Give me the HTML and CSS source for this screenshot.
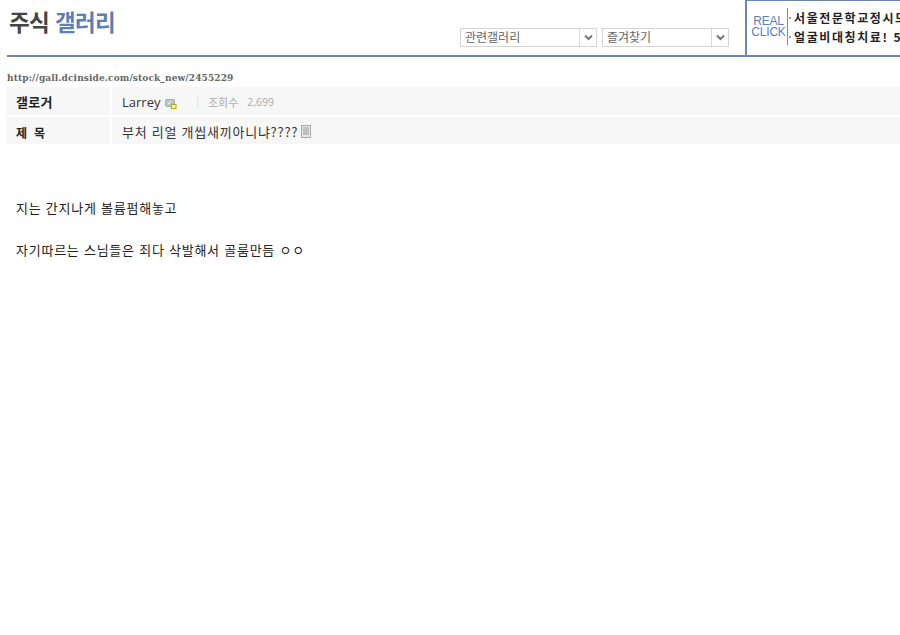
FILE: index.html
```html
<!DOCTYPE html>
<html lang="ko">
<head>
<meta charset="utf-8">
<title>주식 갤러리</title>
<link rel="stylesheet" href="styles.css">
</head>
<body>
<header class="top">
  <h1 class="title">주식 <span class="title-blue">갤러리</span></h1>
  <div class="selects">
    <div class="select sel-a"><span class="sel-text">관련갤러리</span><span class="sel-btn"><svg width="9" height="7" viewBox="0 0 9 7"><path d="M1 1.5 4.5 5 8 1.5" fill="none" stroke="#777" stroke-width="2"/></svg></span></div>
    <div class="select sel-b"><span class="sel-text">즐겨찾기</span><span class="sel-btn"><svg width="9" height="7" viewBox="0 0 9 7"><path d="M1 1.5 4.5 5 8 1.5" fill="none" stroke="#777" stroke-width="2"/></svg></span></div>
  </div>
  <div class="ad">
    <div class="ad-logo"><span>REAL</span><span>CLICK</span></div>
    <div class="ad-lines">
      <div class="ad-line"><i class="dot"></i>서울전문학교정시모집</div>
      <div class="ad-line"><i class="dot"></i>얼굴비대칭치료! 50%</div>
    </div>
  </div>
</header>
<div class="url">http://gall.dcinside.com/stock_new/2455229</div>
<div class="row">
  <div class="label">갤로거</div>
  <div class="value">
    <span class="name">Larrey</span>
    <svg class="user-icon" width="12" height="11" viewBox="0 0 12 11"><rect x="0.5" y="1.5" width="9" height="7" rx="1.5" fill="#bfc4c8" stroke="#a5a9ad"/><path d="M3 6 6 3.5" stroke="#fff"/><rect x="6.5" y="6.5" width="4.5" height="4" fill="#fff3b0" stroke="#c9a400"/></svg>
    <span class="sep">|</span>
    <span class="views">조회수</span>
    <span class="count">2,699</span>
  </div>
</div>
<div class="row row-last">
  <div class="label label-wide">제 목</div>
  <div class="value">
    <span class="subject">부처 리얼 개씹새끼아니냐????</span>
    <svg class="doc-icon" width="10" height="13" viewBox="0 0 10 13"><rect x="0.5" y="0.5" width="9" height="12" fill="#e8e8e8" stroke="#a8a8a8"/><path d="M2 3h6M2 5h6M2 7h6M2 9h6" stroke="#9a9a9a"/></svg>
  </div>
</div>
<main class="content">
  <p class="para">지는 간지나게 볼륨펌해놓고</p>
  <p class="para">자기따르는 스님들은 죄다 삭발해서 골룸만듬 ㅇㅇ</p>
</main>
</body>
</html>
```

FILE: styles.css
```css
* { box-sizing: border-box; }
html, body { margin: 0; padding: 0; }
body {
  width: 900px;
  height: 635px;
  overflow: hidden;
  background: #fff;
  color: #222;
  font-family: "Noto Sans CJK KR", "Liberation Sans", sans-serif;
}
.top {
  display: flex;
  margin-left: 7px;
  height: 57px;
  border-bottom: 2px solid #6d87ad;
}
.title {
  flex: none;
  margin: 6px 0 0 2px;
  width: 451px;
  font-size: 22.5px;
  line-height: 30px;
  font-weight: 700;
  letter-spacing: -0.6px;
  color: #444;
}
.title-blue { color: #5d7fb5; }
.selects { display: flex; gap: 5px; margin-top: 28px; height: 19px; flex: none; }
.select {
  display: flex;
  height: 19px;
  background: #fff;
  border: 1px solid #d4d4d4;
}
.sel-a { width: 137px; }
.sel-b { width: 127px; }
.sel-text {
  flex: 1;
  padding-left: 4px;
  font-size: 12px;
  line-height: 16px;
  color: #666;
}
.sel-btn {
  width: 17px;
  display: flex;
  align-items: center;
  justify-content: center;
  border-left: 1px solid #d8d8d8;
}
.ad {
  display: flex;
  margin-left: 16px;
  flex: none;
  width: 155px;
  height: 55px;
  border-left: 2px solid #6d87ad;
  border-top: 1px solid #6d87ad;
  padding: 7px 0 0 3px;
  overflow: hidden;
}
.ad-logo {
  display: flex;
  flex-direction: column;
  flex: none;
  width: 37px;
  margin-top: 8px;
  font-family: "Liberation Sans", sans-serif;
  font-size: 12px;
  line-height: 11px;
  letter-spacing: -0.2px;
  color: #5a7fc0;
  text-align: center;
}
.ad-lines {
  flex: none;
  border-left: 1px solid #888;
  height: 37px;
  padding-left: 1px;
  white-space: nowrap;
}
.ad-line {
  display: flex;
  align-items: center;
  font-size: 12px;
  line-height: 19px;
  font-weight: 700;
  letter-spacing: 1.6px;
  color: #222;
}
.dot {
  display: block;
  flex: none;
  width: 2px;
  height: 2px;
  margin-right: 3px;
  background: #999;
}
.url {
  margin: 14px 0 0 7px;
  height: 16px;
  font-family: "DejaVu Serif", serif;
  font-size: 9px;
  line-height: 15px;
  font-weight: 700;
  letter-spacing: 0.12px;
  color: #666;
}
.row {
  display: flex;
  gap: 2px;
  margin-left: 6px;
  height: 28px;
  margin-bottom: 2px;
}
.row-last { height: 27px; }
.label {
  width: 104px;
  background: #f7f7f7;
  padding-left: 10px;
  font-size: 13px;
  line-height: 29px;
  font-weight: 700;
  letter-spacing: 0.3px;
  color: #222;
}
.label-wide { font-size: 12px; line-height: 31px; word-spacing: 3px; }
.value {
  flex: 1;
  display: flex;
  align-items: center;
  background: #f7f7f7;
  padding: 1px 0 0 10px;
  font-size: 12px;
  color: #333;
}
.name { font-family: "Open Sans", "Liberation Sans", sans-serif; font-size: 13px; }
.user-icon { margin-left: 5px; margin-top: 3px; }
.sep { margin-left: 19px; font-size: 9px; color: #ccc; }
.views { margin-left: 9px; font-size: 11px; color: #aaa; }
.count { margin-left: 9px; font-family: "Open Sans", "Liberation Sans", sans-serif; font-size: 10.5px; color: #aaa; }
.subject { font-size: 13px; letter-spacing: 0.75px; }
.doc-icon { margin-left: 3px; }
.content { padding: 52px 0 0 16px; }
.para {
  margin: 0 0 22px;
  height: 20px;
  font-size: 13px;
  line-height: 20px;
  letter-spacing: 0.75px;
  color: #222;
}
```
